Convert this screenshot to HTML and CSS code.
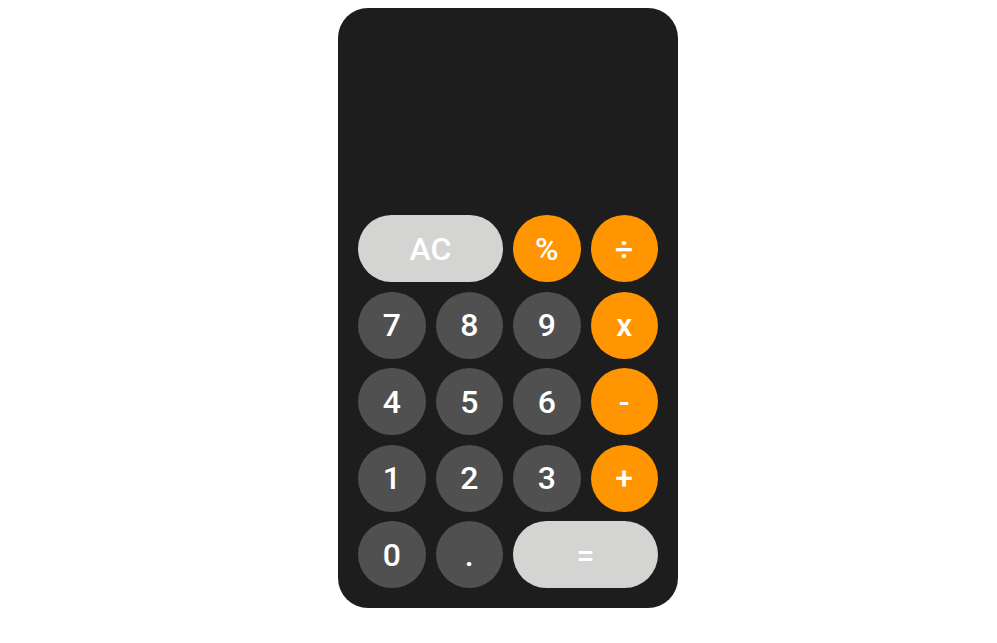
FILE: index.html
```html
<!DOCTYPE html>
<html lang="en">
<head>
<meta charset="utf-8">
<title>Calculator</title>
<link rel="stylesheet" href="styles.css">
</head>
<body>
<div class="calculator">
  <div class="display"></div>
  <div class="keys">
    <button class="key key-light key-wide">AC</button>
    <button class="key key-orange">%</button>
    <button class="key key-orange">÷</button>
    <button class="key">7</button>
    <button class="key">8</button>
    <button class="key">9</button>
    <button class="key key-orange">x</button>
    <button class="key">4</button>
    <button class="key">5</button>
    <button class="key">6</button>
    <button class="key key-orange">-</button>
    <button class="key">1</button>
    <button class="key">2</button>
    <button class="key">3</button>
    <button class="key key-orange">+</button>
    <button class="key">0</button>
    <button class="key">.</button>
    <button class="key key-light key-wide">=</button>
  </div>
</div>
</body>
</html>
```
FILE: styles.css
```css
html, body {
  background: #ffffff;
}
body {
  margin: 8px;
  font-family: Roboto, "Liberation Sans", sans-serif;
}
.calculator {
  width: 340px;
  height: 600px;
  margin-left: 330px;
  box-sizing: border-box;
  background: #1d1d1d;
  border-radius: 30px;
  padding: 20px;
  display: flex;
  flex-direction: column;
  justify-content: flex-end;
}
.display {
  flex: 1;
}
.keys {
  display: grid;
  grid-template-columns: repeat(4, 1fr);
  grid-auto-rows: 67px;
  column-gap: 10px;
  row-gap: 9.5px;
}
.key {
  border: none;
  margin: 0;
  padding: 0;
  border-radius: 34px;
  background: #505050;
  color: #ffffff;
  font-family: Roboto, "Liberation Sans", sans-serif;
  font-size: 32px;
  font-weight: 500;
  display: flex;
  align-items: center;
  justify-content: center;
}
.key-orange {
  background: #ff9500;
}
.key-light {
  background: #d4d4d2;
}
.key-wide {
  grid-column: span 2;
}
```
